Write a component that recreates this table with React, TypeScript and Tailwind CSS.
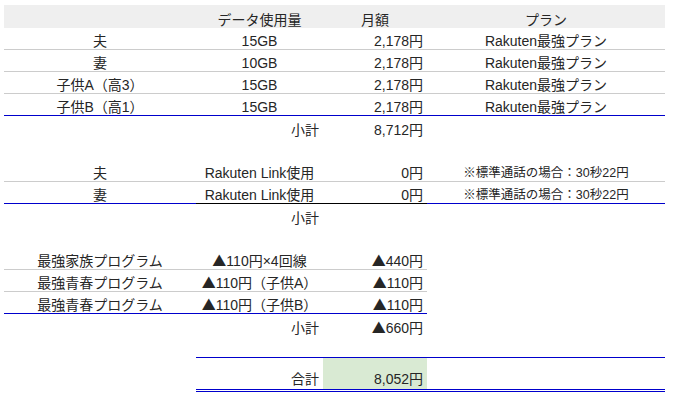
import React from 'react';

type Align = 'left' | 'center' | 'right';

const GRAY = 'border-b border-[#cccccc]';
const BLUE = 'border-b border-[#0000cc]';
const BLACK = 'border-b border-black';

const alignClass: Record<Align, string> = {
  left: 'justify-start',
  center: 'justify-center',
  right: 'justify-end',
};

function Cell({
  children,
  align = 'center',
  className = '',
}: {
  children?: React.ReactNode;
  align?: Align;
  className?: string;
}) {
  return (
    <div
      className={`h-[22px] flex items-end px-[4px] leading-[16px] whitespace-nowrap ${alignClass[align]} ${className}`}
    >
      {children}
    </div>
  );
}

// ▲ from the CJK font so it is full size, like the sheet
function Minus({ children }: { children: React.ReactNode }) {
  return (
    <span>
      <span className="font-['Noto_Sans_CJK_JP',sans-serif]">▲</span>
      {children}
    </span>
  );
}

const lines = [
  { who: '夫', data: '15GB', price: '2,178円', plan: 'Rakuten最強プラン' },
  { who: '妻', data: '10GB', price: '2,178円', plan: 'Rakuten最強プラン' },
  { who: '子供A（高3）', data: '15GB', price: '2,178円', plan: 'Rakuten最強プラン' },
  { who: '子供B（高1）', data: '15GB', price: '2,178円', plan: 'Rakuten最強プラン' },
];

const calls = [
  { who: '夫', use: 'Rakuten Link使用', price: '0円', note: '※標準通話の場合：30秒22円' },
  { who: '妻', use: 'Rakuten Link使用', price: '0円', note: '※標準通話の場合：30秒22円' },
];

const discounts = [
  { name: '最強家族プログラム', detail: '110円×4回線', price: '440円' },
  { name: '最強青春プログラム', detail: '110円（子供A）', price: '110円' },
  { name: '最強青春プログラム', detail: '110円（子供B）', price: '110円' },
];

export default function App() {
  return (
    <div className="w-[677px] h-[398px] bg-white pt-[5px] pl-[4px] text-[14px] text-[#262626] font-['Liberation_Sans','Noto_Sans_CJK_JP',sans-serif]">
      <div className="grid grid-cols-[192px_127px_104px_238px]">
        {/* Header */}
        <Cell className="h-[23px] bg-[#efefef]" />
        <Cell className="h-[23px] bg-[#efefef]">データ使用量</Cell>
        <Cell className="h-[23px] bg-[#efefef]">月額</Cell>
        <Cell className="h-[23px] bg-[#efefef]">プラン</Cell>

        {/* Data plans */}
        {lines.map((row, i) => {
          const b = i === lines.length - 1 ? BLUE : GRAY;
          return (
            <React.Fragment key={row.who}>
              <Cell className={b}>{row.who}</Cell>
              <Cell className={b}>{row.data}</Cell>
              <Cell align="right" className={b}>{row.price}</Cell>
              <Cell className={b}>{row.plan}</Cell>
            </React.Fragment>
          );
        })}
        <Cell />
        <Cell align="right">小計</Cell>
        <Cell align="right">8,712円</Cell>
        <Cell />

        {/* spacer */}
        <Cell className="col-span-4" />

        {/* Calls */}
        {calls.map((row, i) => {
          const last = i === calls.length - 1;
          return (
            <React.Fragment key={row.who}>
              <Cell className={last ? BLUE : GRAY}>{row.who}</Cell>
              <Cell className={last ? BLACK : GRAY}>{row.use}</Cell>
              <Cell align="right" className={last ? BLACK : GRAY}>{row.price}</Cell>
              <Cell className={`text-[12.5px] ${last ? BLUE : GRAY}`}>{row.note}</Cell>
            </React.Fragment>
          );
        })}
        <Cell />
        <Cell align="right">小計</Cell>
        <Cell />
        <Cell />

        <Cell className="col-span-4" />

        {/* Discounts */}
        {discounts.map((row, i) => {
          const b = i === discounts.length - 1 ? BLUE : GRAY;
          return (
            <React.Fragment key={row.detail}>
              <Cell className={b}>{row.name}</Cell>
              <Cell className={b}><Minus>{row.detail}</Minus></Cell>
              <Cell align="right" className={b}><Minus>{row.price}</Minus></Cell>
              <Cell />
            </React.Fragment>
          );
        })}
        <Cell />
        <Cell align="right">小計</Cell>
        <Cell align="right"><Minus>660円</Minus></Cell>
        <Cell />

        {/* spacer above total */}
        <Cell />
        <Cell className={BLUE} />
        <Cell className={BLUE} />
        <Cell className={BLUE} />

        {/* Total */}
        <Cell className="h-[34px]" />
        <Cell align="right" className="h-[34px] pb-[2px] border-b-[3px] border-double border-[#0000cc]">
          合計
        </Cell>
        <Cell
          align="right"
          className="h-[34px] pb-[2px] border-b-[3px] border-double border-[#0000cc] bg-[#d9ead3] bg-clip-padding"
        >
          8,052円
        </Cell>
        <Cell className="h-[34px] border-b-[3px] border-double border-[#0000cc]" />
      </div>
    </div>
  );
}
